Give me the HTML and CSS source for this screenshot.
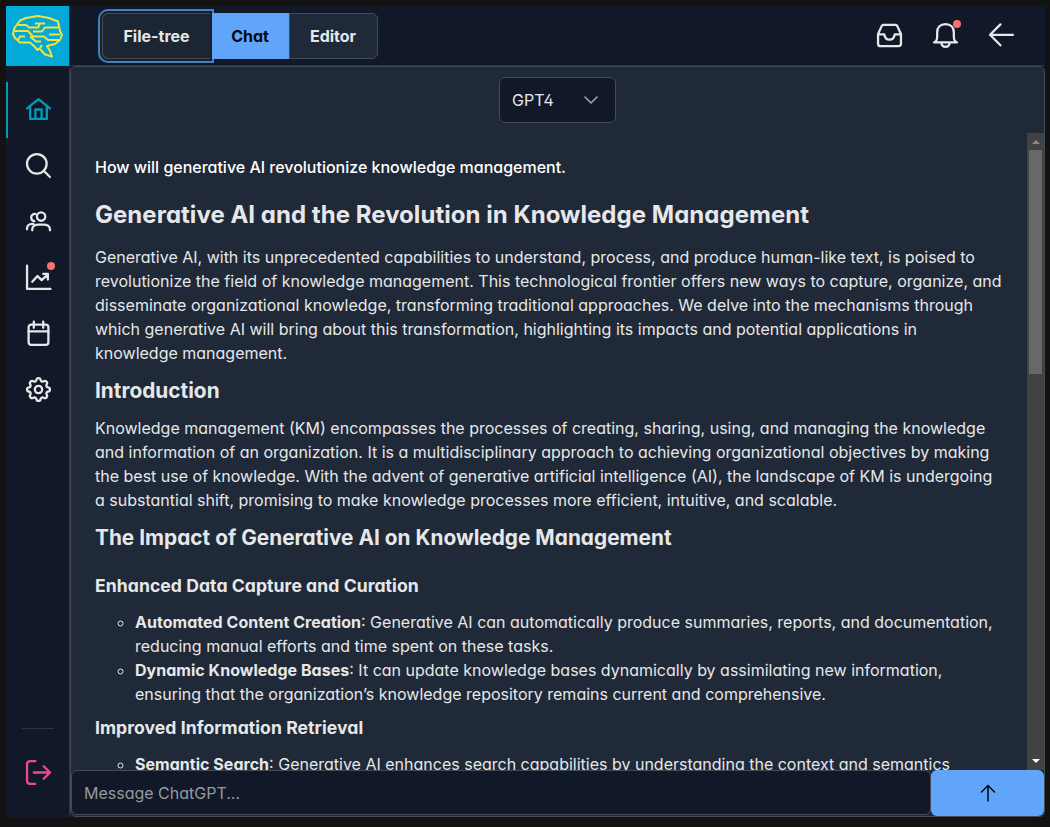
FILE: index.html
```html
<!DOCTYPE html>
<html lang="en">
<head>
<meta charset="utf-8">
<title>Chat</title>
<link rel="stylesheet" href="styles.css">
</head>
<body>
<div class="app">
  <aside class="sidebar">
    <div class="logo">
      <svg width="63" height="60" viewBox="0 0 63 60" fill="none" stroke="#f3e23d" stroke-width="2" stroke-linejoin="round">
        <path d="M7 28 L8.500 22 L14 14.500 L20 12 L32 10 L43 12 L52 15.500 L54 25 L56 29 L54 34 L49 38 L41 40 L44 45 L46 50.500 L39 48.500 L33.500 42.500 L31.500 44 L28 40 L24 36.500 L14 36.500 L9 32Z"/>
        <path d="M12 19 L20 19 L23 21.500 L32 21.500 L34 17.500 L29 17.500 M34 17.500 L39 17.500 M8 25 L22 25 L27 30.500 L38 30.500 L42 34 L53 34 M27 25.500 L36 25.500 L39 21.500 L53 21.500 M43 28.500 L54 28.500 M12 34 L14 30.500 L19 30.500 M24 30.500 L30 35.500 L35 35.500 M34 42 L36 39"/>
      </svg>
    </div>
    <nav class="nav">
      <a class="nav-item active"><svg class="ico" viewBox="0 0 24 24"><path d="M1 11 12 2l11 9M4 9v12h16V9M9 21v-9h6v9"/></svg></a>
      <a class="nav-item"><svg class="ico" viewBox="0 0 24 24"><circle cx="10.4" cy="10.4" r="9.4"/><path d="m17 17 6 6"/></svg></a>
      <a class="nav-item"><svg class="ico" viewBox="0 0 24 24"><circle cx="14.500" cy="7.300" r="4"/><path d="M6 20.500v-1c0-3 2.800-4.600 6-4.600h5c3.200 0 6 1.600 6 4.600v1M9 4.800C6.700 4.500 5 6 5 8.200c0 2 1.200 3.200 3 3.500M7 14.200H6c-3 0-5 1.800-5 4.300v1"/></svg></a>
      <a class="nav-item"><svg class="ico" viewBox="0 0 24 24"><path d="M1 .5V23h22.500M6 16l5-5.500 4 4L21 9M16.500 8.500H21V14"/></svg><i class="dot"></i></a>
      <a class="nav-item"><svg class="ico" viewBox="0 0 24 24"><rect x="2.500" y="3.500" width="19" height="19.500" rx="2.500"/><path d="M2.500 10h19M7.500.5v6M16.500.5v6"/></svg></a>
      <a class="nav-item"><svg class="ico" viewBox="0 0 24 24"><path d="M12 1c1 0 1.900.8 2.100 1.900.3 1.500 1.500 2 2.800 1.200 1-.6 2-.5 2.700.3.800.7.900 1.700.3 2.700-.8 1.300-.3 2.500 1.200 2.800C22.200 10.100 23 11 23 12s-.8 1.900-1.900 2.100c-1.500.3-2 1.500-1.200 2.800.6 1 .5 2-.3 2.700-.7.800-1.700.9-2.700.3-1.300-.8-2.500-.3-2.800 1.200C13.900 22.200 13 23 12 23s-1.900-.8-2.100-1.900c-.3-1.500-1.500-2-2.800-1.200-1 .6-2 .5-2.700-.3-.8-.7-.9-1.700-.3-2.700.8-1.300.3-2.500-1.200-2.800C1.800 13.900 1 13 1 12s.8-1.900 1.900-2.100c1.500-.3 2-1.500 1.200-2.800-.6-1-.5-2 .3-2.700.7-.8 1.700-.9 2.700-.3 1.300.8 2.500.3 2.800-1.200C10.100 1.800 11 1 12 1Z"/><circle cx="12" cy="12" r="3.500"/></svg></a>
    </nav>
    <div class="sidebar-foot">
      <a class="nav-item logout"><svg class="ico" viewBox="0 0 24 24"><path d="M9 1H4C2 1 1 2 1 4v16c0 2 1 3 3 3h5M7.500 12H23M17 6l6 6-6 6"/></svg></a>
    </div>
  </aside>
  <div class="content">
    <header class="topbar">
      <div class="toggle">
        <button class="tab focus">File-tree</button><button class="tab selected">Chat</button><button class="tab last">Editor</button>
      </div>
      <div class="actions">
        <span class="action"><svg class="ico" viewBox="0 0 24 24"><path d="M1 10.500 4.500 3c.4-.8.8-1.200 1.500-1.200h12c.7 0 1.100.4 1.500 1.200L23 10.500V20c0 1.500-.8 2.200-2.200 2.200H3.200C1.800 22.200 1 21.500 1 20ZM1 11h6c.5 3 2 5 5 5s4.500-2 5-5h6"/></svg></span>
        <span class="action"><svg class="ico" viewBox="0 0 24 24"><path d="M1 18.500c2.500-.6 3-3 3-5.500V9c0-5 3-8 8-8s8 3 8 8v4c0 2.500.5 4.900 3 5.500ZM8 19c.3 2.500 1.800 3.800 4 3.800s3.700-1.300 4-3.800"/></svg><i class="dot"></i></span>
        <span class="action"><svg class="ico" viewBox="0 0 24 24"><path d="M1 11.300h22M11 1.300 1 11.300l10 10"/></svg></span>
      </div>
    </header>
    <main class="panel">
      <div class="picker"><div class="select"><span>GPT4</span><svg width="14" height="14" viewBox="0 0 14 14"><path d="m1 4 6 6 6-6"/></svg></div></div>
      <div class="scroller">
        <article class="messages">
          <p class="question">How will generative AI revolutionize knowledge management.</p>
          <h1>Generative AI and the Revolution in Knowledge Management</h1>
          <p>Generative AI, with its unprecedented capabilities to understand, process, and produce human-like text, is poised to<br>revolutionize the field of knowledge management. This technological frontier offers new ways to capture, organize, and<br>disseminate organizational knowledge, transforming traditional approaches. We delve into the mechanisms through<br>which generative AI will bring about this transformation, highlighting its impacts and potential applications in<br>knowledge management.</p>
          <h2>Introduction</h2>
          <p>Knowledge management (KM) encompasses the processes of creating, sharing, using, and managing the knowledge<br>and information of an organization. It is a multidisciplinary approach to achieving organizational objectives by making<br>the best use of knowledge. With the advent of generative artificial intelligence (AI), the landscape of KM is undergoing<br>a substantial shift, promising to make knowledge processes more efficient, intuitive, and scalable.</p>
          <h2>The Impact of Generative AI on Knowledge Management</h2>
          <h3 class="first">Enhanced Data Capture and Curation</h3>
          <ul>
            <li><strong>Automated Content Creation</strong>: Generative AI can automatically produce summaries, reports, and documentation,<br>reducing manual efforts and time spent on these tasks.</li>
            <li><strong>Dynamic Knowledge Bases</strong>: It can update knowledge bases dynamically by assimilating new information,<br>ensuring that the organization’s knowledge repository remains current and comprehensive.</li>
          </ul>
          <h3>Improved Information Retrieval</h3>
          <ul>
            <li><strong>Semantic Search</strong>: Generative AI enhances search capabilities by understanding the context and semantics</li>
          </ul>
        </article>
        <div class="scrollbar"><i class="up"></i><div class="thumb"></div><i class="down"></i></div>
      </div>
      <div class="composer">
        <div class="field">Message ChatGPT...</div>
        <button class="send"><svg width="16" height="18" viewBox="0 0 16 18"><path d="M8 17V1.500M1.500 8 8 1.500 14.500 8"/></svg></button>
      </div>
    </main>
  </div>
</div>
</body>
</html>
```
FILE: styles.css
```css
* { box-sizing: border-box; }
body {
  margin: 0;
  padding: 6px 5px 10px 6px;
  height: 827px;
  overflow: hidden;
  background: #121212;
  color: #e6e7e9;
  font: 16px/24px Inter, sans-serif;
  font-feature-settings: "cv02", "cv03", "cv04", "cv11";
}
h1, h2, h3, p, ul { margin: 0; }
button { font: inherit; font-feature-settings: inherit; color: inherit; border: 0; padding: 0; }
.app { display: flex; height: 811px; background: #111827; }
.sidebar { width: 64px; border-right: 1px solid #2a3442; display: flex; flex-direction: column; }
.logo { height: 60px; background: #03a9d8; }
.logo svg { display: block; }
.nav { padding-top: 16px; }
.nav-item { position: relative; display: flex; align-items: center; justify-content: center; height: 56px; padding-bottom: 1px; border-left: 2px solid transparent; }
.nav-item.active { color: #069bb4; border-color: #069bb4; }
.ico { width: 25px; height: 25px; fill: none; stroke: currentColor; stroke-width: 2.2; stroke-linecap: round; stroke-linejoin: round; overflow: visible; }
.dot { position: absolute; width: 8px; height: 8px; border-radius: 50%; background: #f87171; }
.nav .dot { left: 39px; top: 12px; }
.sidebar-foot { margin: auto 15px 17px 16px; border-top: 1px solid #283343; padding-top: 15px; }
.logout { color: #ec4899; padding-bottom: 0; border: 0; }
.content { flex: 1; min-width: 0; display: flex; flex-direction: column; }
.topbar { height: 60px; display: flex; align-items: center; justify-content: space-between; padding: 0 31px 0 32px; border-bottom: 1px solid #2a3442; }
.toggle { display: flex; height: 46px; font-weight: 700; }
.tab { background: #1f2937; border: 1px solid #424b57; height: 46px; padding-right: 1px; }
.tab.focus { width: 108px; margin-right: 2px; padding-right: 0; border-right: 0; border-radius: 6px 0 0 6px; background: #1c2532; box-shadow: 0 0 0 2px #1c2127, 0 0 0 4px #4380c5; }
.tab.selected { position: relative; width: 77px; background: #60a5fa; border: 0; color: #030712; }
.tab.last { width: 89px; border-radius: 0 6px 6px 0; }
.actions { display: flex; gap: 31px; }
.action { position: relative; height: 25px; width: 25px; }
.action .ico { display: block; }
.action .dot { left: 20px; top: -3px; }
.panel { flex: 1; min-height: 0; border: 1px solid #424b57; border-radius: 6px; background: #1f2937; display: flex; flex-direction: column; }
.picker { height: 66px; padding-top: 10px; display: flex; justify-content: center; }
.select { width: 117px; height: 46px; border: 1px solid #424b57; border-radius: 6px; background: #111827; display: flex; align-items: center; justify-content: space-between; padding: 0 17px 0 12px; }
.select svg { fill: none; stroke: #a4a8ae; stroke-width: 1.5; stroke-linecap: round; }
.scroller { flex: 1; min-height: 0; display: flex; overflow: hidden; }
.messages { flex: 1; padding: 22px 0 0 24px; white-space: nowrap; overflow: hidden; }
.question { color: #fff; font-weight: 500; letter-spacing: -0.01px; }
h1 { font-size: 24px; line-height: 28px; font-weight: 700; letter-spacing: 0.03px; margin: 22px 0 16px; }
h2 { font-size: 20.8px; line-height: 26px; font-weight: 700; letter-spacing: 0.02px; margin: 13px 0 12px; }
h3 { font-size: 17.6px; line-height: 24px; font-weight: 700; letter-spacing: 0.05px; margin: 10px 0 12px; }
h3.first { margin-top: 23px; }
ul { padding-left: 40px; list-style: circle; }
strong { font-weight: 700; letter-spacing: 0.03px; }
.scrollbar { width: 17px; background: #424242; display: flex; flex-direction: column; align-items: center; }
.up, .down { border: 4px solid transparent; border-top: 0; border-bottom-color: #8a8a8a; margin: 7px 0 6px; }
.thumb { width: 13px; height: 224px; background: #686868; }
.down { border: 4px solid transparent; border-bottom: 0; border-top-color: #fff; margin: auto 0 7px; }
.composer { height: 46px; display: flex; }
.field { flex: 1; height: 45px; border: 1px solid #424b57; border-radius: 6px; background: #111827; color: #96999e; padding: 10px 12px; }
.send { width: 113px; border-radius: 6px; background: #60a5fa; display: flex; align-items: center; justify-content: center; }
.send svg { fill: none; stroke: #030712; stroke-width: 1.5; stroke-linecap: round; stroke-linejoin: round; }
```
